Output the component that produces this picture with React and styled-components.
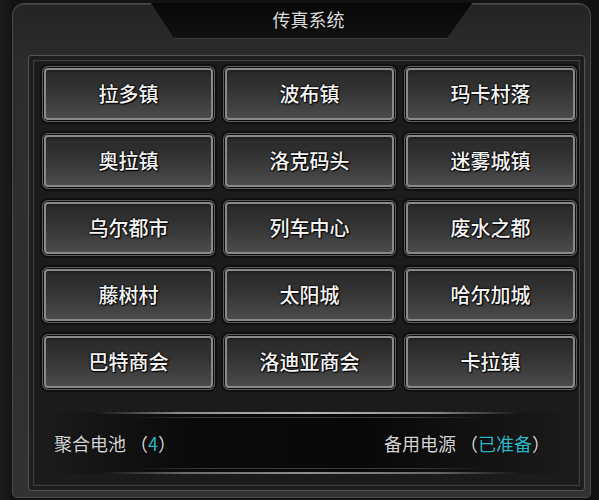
import React from "react";
import styled, { createGlobalStyle } from "styled-components";

const GlobalStyle = createGlobalStyle`
    html, body {
        margin: 0;
        padding: 0;
        background: #121212;
    }
    body {
        font-family: "Noto Sans CJK SC", "Noto Sans", sans-serif;
    }
`;

const towns = [
    "拉多镇", "波布镇", "玛卡村落",
    "奥拉镇", "洛克码头", "迷雾城镇",
    "乌尔都市", "列车中心", "废水之都",
    "藤树村", "太阳城", "哈尔加城",
    "巴特商会", "洛迪亚商会", "卡拉镇",
];

const App = () => {
    return (
        <>
            <GlobalStyle />
            <St.Page>
                <St.Panel>
                    <St.Header>
                        <St.TabEdge>
                            <St.Tab>
                                <St.Title>传真系统</St.Title>
                            </St.Tab>
                        </St.TabEdge>
                    </St.Header>
                    <St.Frame>
                        <St.Grid>
                            {towns.map((name) => (
                                <St.TownButton key={name}>{name}</St.TownButton>
                            ))}
                        </St.Grid>
                        <St.Footer>
                            <St.Stat>
                                聚合电池 （<St.Value>4</St.Value>）
                            </St.Stat>
                            <St.Stat>
                                备用电源 （<St.Value>已准备</St.Value>）
                            </St.Stat>
                        </St.Footer>
                    </St.Frame>
                </St.Panel>
            </St.Page>
        </>
    );
};

export default App;

const St = {
    Page: styled.div`
        width: 599px;
        height: 500px;
        box-sizing: border-box;
        padding: 3px 8px 2px 12px;
        background: linear-gradient(90deg, #1c1c1c 0px, #161616 10px, #121212 12px);
    `,

    Panel: styled.div`
        height: 100%;
        box-sizing: border-box;
        display: flex;
        flex-direction: column;
        padding: 0 5px 6px 15px;
        border: 1px solid #4a4a4a;
        border-radius: 12px 12px 5px 5px;
        background: linear-gradient(180deg, #242424 0px, #2c2c2c 60px, #323232 100%);
        box-shadow: inset 0 1px 0 #3c3c3c;
    `,

    Header: styled.div`
        height: 51px;
        display: flex;
        justify-content: center;
        padding-left: 20px;
        margin-left: -15px;
        margin-right: -5px;
    `,

    TabEdge: styled.div`
        width: 322px;
        height: 36px;
        margin-top: -1px;
        background: #3a3a3a;
        clip-path: polygon(0 0, 100% 0, calc(100% - 25px) 100%, 23px 100%);
    `,

    Tab: styled.div`
        height: 35px;
        display: flex;
        align-items: center;
        justify-content: center;
        background: linear-gradient(180deg, #080808, #111111);
        clip-path: polygon(0 0, 100% 0, calc(100% - 25px) 100%, 23px 100%);
    `,

    Title: styled.div`
        font-size: 18px;
        color: #dcdcdc;
        margin: -4px 6px 0 0;
        text-shadow: 0 0 2px #000;
    `,

    Frame: styled.div`
        flex: 1;
        display: flex;
        flex-direction: column;
        padding: 10px 7px 0 13px;
        border: 1px solid #555555;
        border-radius: 3px;
        background: #1b1b1b;
        box-shadow: inset 0 0 0 4px #1e1e1e, inset 0 0 0 5px #3c3c3c, inset 0 0 0 6px #222;
    `,

    Grid: styled.div`
        display: grid;
        grid-template-columns: repeat(3, 1fr);
        grid-auto-rows: 56px;
        column-gap: 8px;
        row-gap: 11px;
    `,

    TownButton: styled.button`
        display: flex;
        align-items: center;
        justify-content: center;
        padding: 0 0 2px;
        border: 1px solid #5e5e5e;
        border-radius: 6px;
        background: linear-gradient(180deg, #272727 0%, #343434 45%, #4e4e4e 100%);
        box-shadow: 0 0 0 2px #101010, inset 0 0 0 1px #0e0e0e, inset 0 0 0 3px #8a8a8a, inset 0 4px 3px #1c1c1c;
        font-family: "Noto Sans CJK SC", "Noto Sans", sans-serif;
        font-size: 20px;
        font-weight: 500;
        color: #f4f4f4;
        text-shadow: 0 0 2px #000, 0 0 2px #000, 1px 1px 1px #000;
        cursor: pointer;
    `,

    Footer: styled.div`
        height: 62px;
        margin: 22px 0 16px;
        display: flex;
        align-items: center;
        justify-content: space-between;
        padding: 0 27px 0 12px;
        background:
            linear-gradient(90deg, transparent 0, #8a8a8a 20%, #b8b8b8 50%, #8a8a8a 80%, transparent 100%) top 0 left 53px / calc(100% - 110px) 2px no-repeat,
            linear-gradient(90deg, transparent 0, #3a3a3a 20%, #3a3a3a 80%, transparent 100%) top 5px left 90px / calc(100% - 180px) 1px no-repeat,
            linear-gradient(90deg, transparent 0, #3a3a3a 20%, #3a3a3a 80%, transparent 100%) bottom 5px left 90px / calc(100% - 180px) 1px no-repeat,
            linear-gradient(90deg, transparent 0, #6a6a6a 20%, #8e8e8e 50%, #6a6a6a 80%, transparent 100%) bottom 0 left 58px / calc(100% - 115px) 2px no-repeat,
            linear-gradient(90deg, transparent 0%, #0a0a0a 28%, #080808 60%, transparent 100%);
    `,

    Stat: styled.div`
        font-size: 18px;
        color: #d4d4d4;
        text-shadow: 0 0 2px #000;
    `,

    Value: styled.span`
        color: #2fb6c4;
    `,
};
